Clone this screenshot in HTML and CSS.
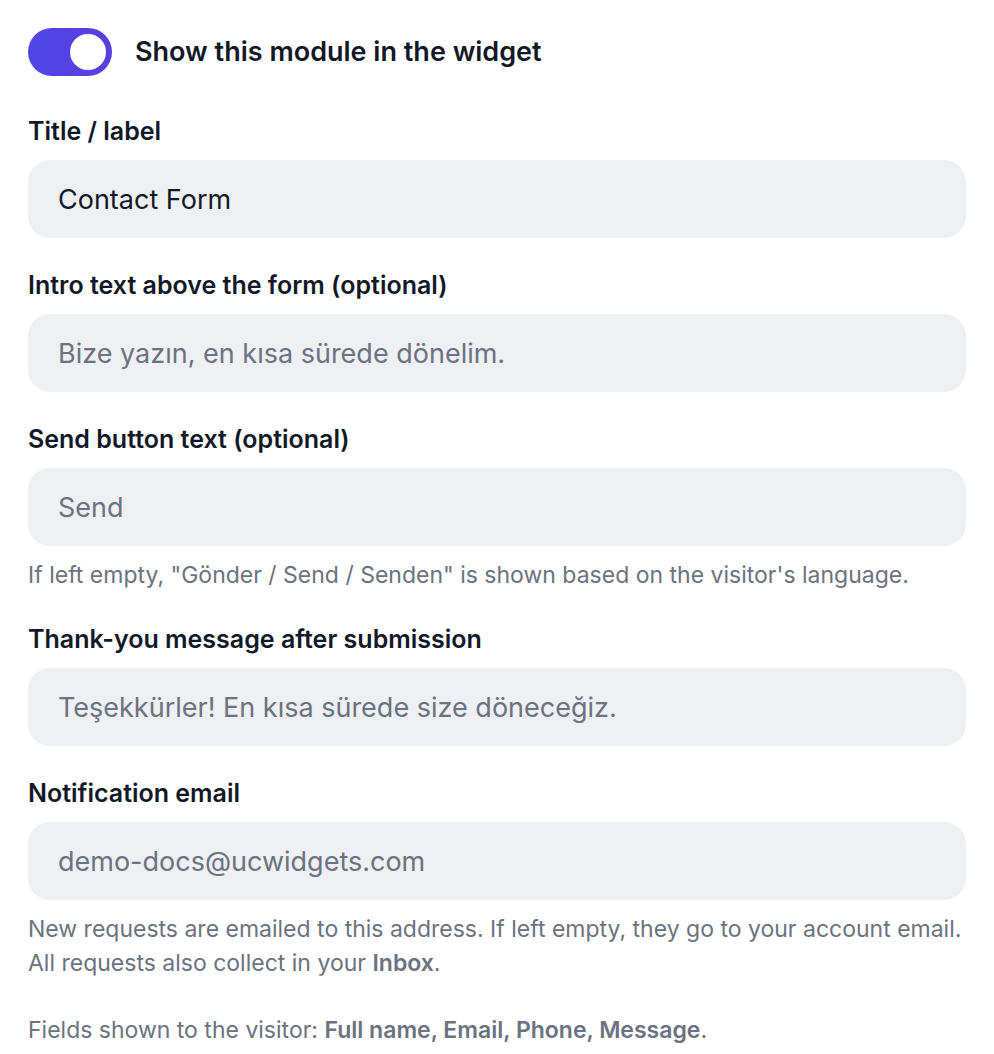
FILE: index.html
```html
<!DOCTYPE html>
<html lang="en">
<head>
<meta charset="utf-8">
<title>Contact Form module</title>
<link rel="stylesheet" href="styles.css">
</head>
<body>
<div class="panel">
  <label class="switch-row">
    <span class="switch"><span class="knob"></span></span>
    <span class="switch-label">Show this module in the widget</span>
  </label>

  <div class="field">
    <div class="label">Title / label</div>
    <div class="input">Contact Form</div>
  </div>

  <div class="field">
    <div class="label">Intro text above the form (optional)</div>
    <div class="input placeholder">Bize yazın, en kısa sürede dönelim.</div>
  </div>

  <div class="field">
    <div class="label">Send button text (optional)</div>
    <div class="input placeholder">Send</div>
    <p class="help">If left empty, "Gönder / Send / Senden" is shown based on the visitor's language.</p>
  </div>

  <div class="field">
    <div class="label">Thank-you message after submission</div>
    <div class="input placeholder">Teşekkürler! En kısa sürede size döneceğiz.</div>
  </div>

  <div class="field">
    <div class="label">Notification email</div>
    <div class="input placeholder">demo-docs@ucwidgets.com</div>
    <p class="help">New requests are emailed to this address. If left empty, they go to your account email. All requests also collect in your <b>Inbox</b>.</p>
  </div>

  <p class="help fields-note">Fields shown to the visitor: <b>Full name, Email, Phone, Message</b>.</p>
</div>
</body>
</html>
```

FILE: styles.css
```css
html, body {
  margin: 0;
  padding: 0;
  background: #ffffff;
}
body {
  font-family: Inter, "Noto Sans", "Liberation Sans", sans-serif;
  color: #111827;
}
.panel {
  padding: 28px 28px 0 28px;
  display: flex;
  flex-direction: column;
}
.switch-row {
  display: flex;
  align-items: center;
  gap: 23px;
  margin-bottom: 41px;
}
.switch {
  width: 84px;
  height: 48px;
  border-radius: 24px;
  background: linear-gradient(90deg, #4f46e5, #5b3fdc);
  display: flex;
  align-items: center;
  justify-content: flex-end;
  padding-right: 6px;
  box-sizing: border-box;
  flex: none;
}
.knob {
  width: 36px;
  height: 36px;
  border-radius: 50%;
  background: #ffffff;
}
.switch-label {
  font-size: 27px;
  line-height: 34px;
  font-weight: 600;
  color: #111827;
}
.field {
  display: flex;
  flex-direction: column;
  margin-bottom: 33px;
}
.label {
  font-size: 25px;
  line-height: 28px;
  font-weight: 600;
  color: #111827;
  margin-bottom: 15px;
}
.input {
  height: 78px;
  border-radius: 22px;
  background: #eff0f3;
  padding: 0 30px;
  display: flex;
  align-items: center;
  font-size: 27px;
  color: #111827;
}
.input.placeholder {
  color: #6b7280;
}
.help {
  margin: 12px 0 0 0;
  font-size: 23px;
  line-height: 34px;
  color: #6b7280;
}
.help b {
  font-weight: 600;
}
.fields-note {
  margin-top: 0;
}
```
